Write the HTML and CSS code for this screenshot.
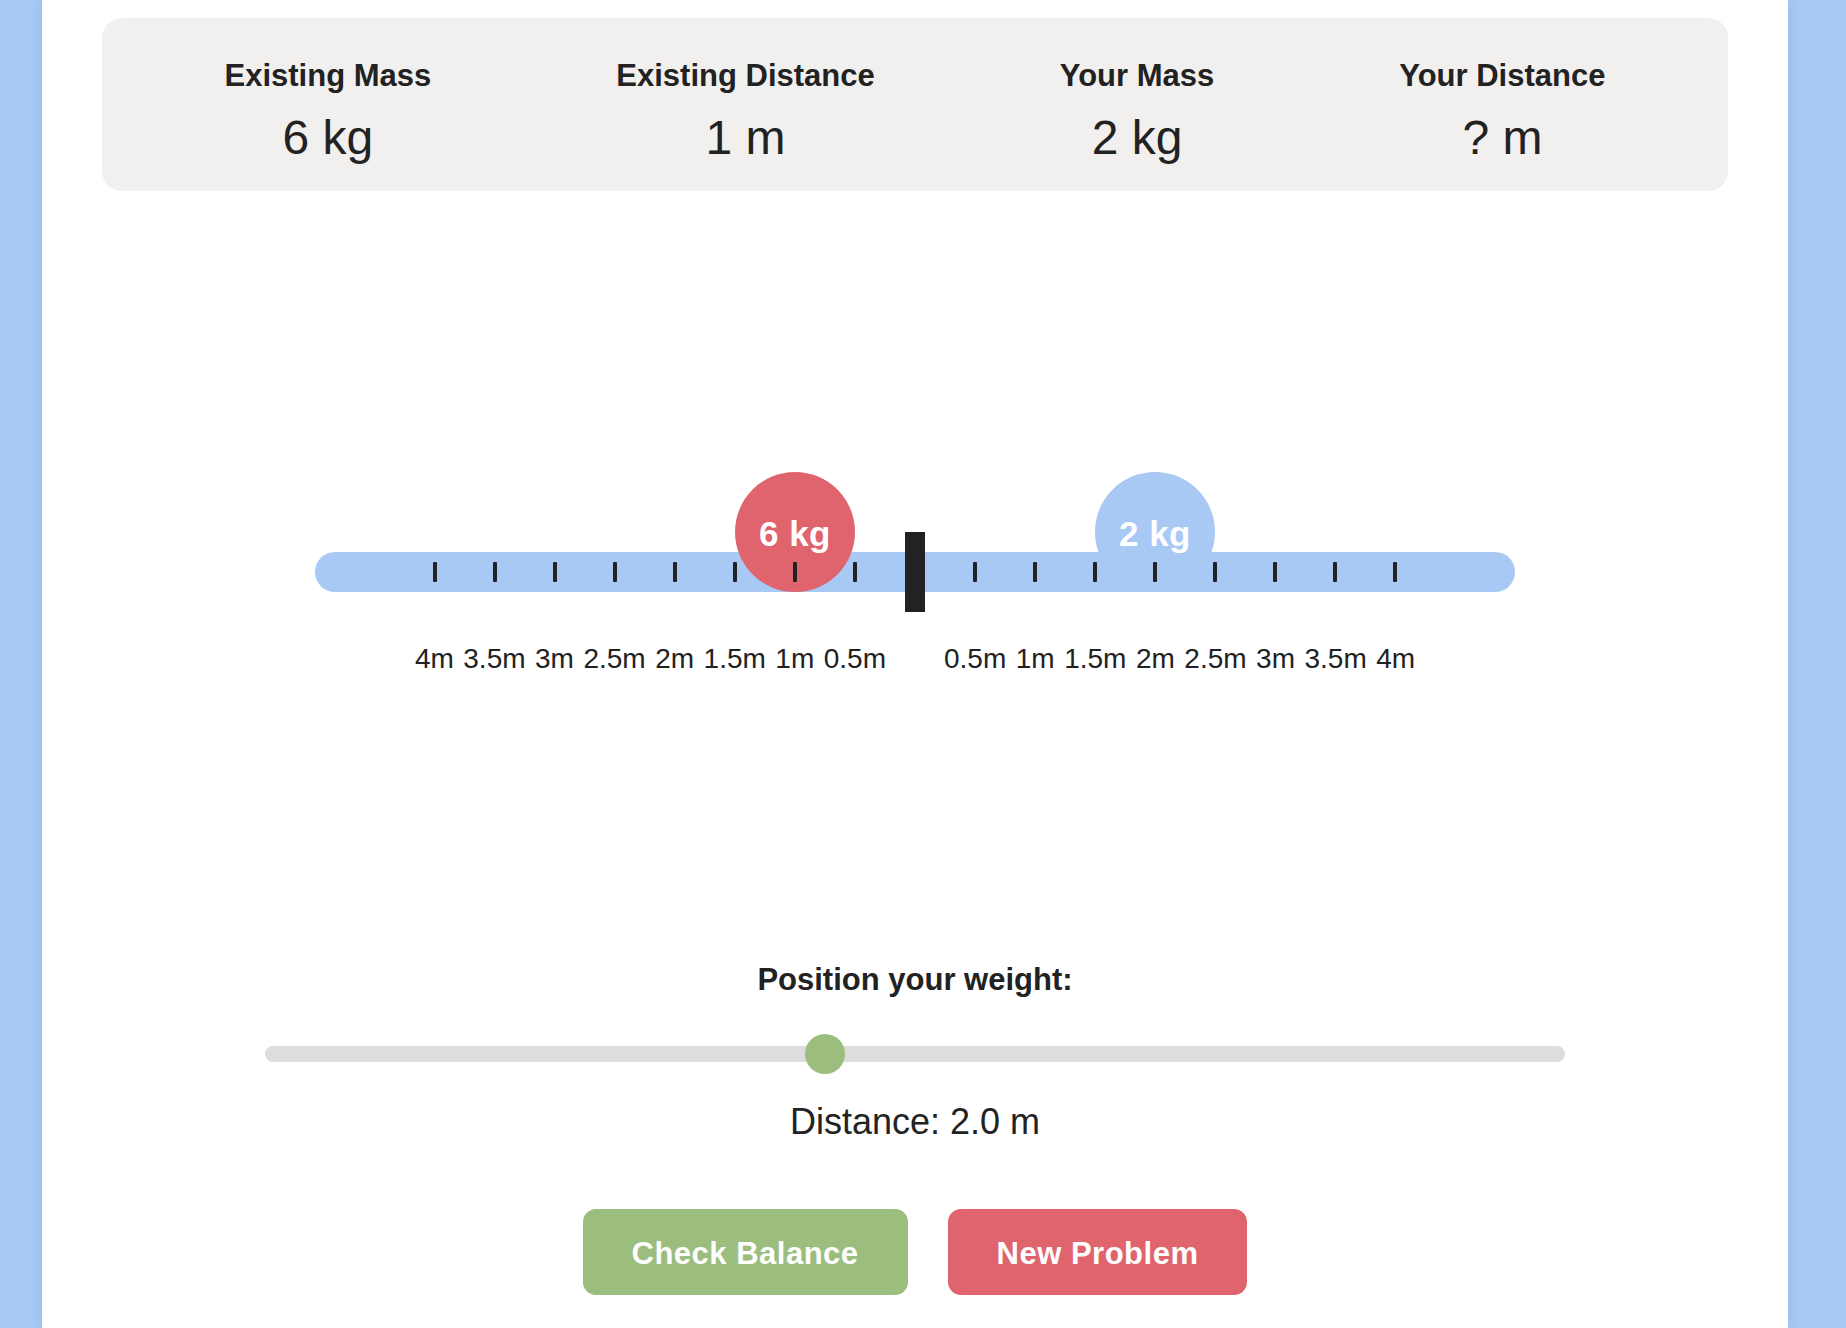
FILE: index.html
```html
<!DOCTYPE html>
<html lang="en">
<head>
<meta charset="utf-8">
<title>Balance the Seesaw</title>
<link rel="stylesheet" href="styles.css">
</head>
<body>
<main class="page">
  <section class="stats">
    <div class="stat">
      <div class="stat-label">Existing Mass</div>
      <div class="stat-value">6 kg</div>
    </div>
    <div class="stat">
      <div class="stat-label">Existing Distance</div>
      <div class="stat-value">1 m</div>
    </div>
    <div class="stat">
      <div class="stat-label">Your Mass</div>
      <div class="stat-value">2 kg</div>
    </div>
    <div class="stat">
      <div class="stat-label">Your Distance</div>
      <div class="stat-value">? m</div>
    </div>
  </section>

  <section class="scene">
    <div class="beam">
      <div class="weight weight-existing" style="--d:-1">6 kg</div>
      <div class="weight weight-yours" style="--d:2">2 kg</div>
      <div class="ticks">
        <span class="tick"></span><span class="tick"></span><span class="tick"></span><span class="tick"></span>
        <span class="tick"></span><span class="tick"></span><span class="tick"></span><span class="tick"></span>
        <span class="tick tick-gap"></span>
        <span class="tick"></span><span class="tick"></span><span class="tick"></span><span class="tick"></span>
        <span class="tick"></span><span class="tick"></span><span class="tick"></span><span class="tick"></span>
      </div>
      <div class="fulcrum"></div>
    </div>
    <div class="scale">
      <div class="scale-side">
        <span>4m</span><span>3.5m</span><span>3m</span><span>2.5m</span><span>2m</span><span>1.5m</span><span>1m</span><span>0.5m</span>
      </div>
      <div class="scale-side">
        <span>0.5m</span><span>1m</span><span>1.5m</span><span>2m</span><span>2.5m</span><span>3m</span><span>3.5m</span><span>4m</span>
      </div>
    </div>
  </section>

  <section class="controls">
    <label class="control-title" for="pos">Position your weight:</label>
    <input class="slider" id="pos" type="range" min="0.5" max="4" step="0.1" value="2">
    <div class="readout">Distance: 2.0 m</div>
    <div class="buttons">
      <button class="btn btn-check">Check Balance</button>
      <button class="btn btn-new">New Problem</button>
    </div>
  </section>
</main>
</body>
</html>
```

FILE: styles.css
```css
* {
  box-sizing: border-box;
}

html, body {
  margin: 0;
  padding: 0;
}

body {
  background: #a8c9f4;
  font-family: "Liberation Sans", Arial, Helvetica, sans-serif;
  color: #222;
  min-height: 1328px;
}

.page {
  width: 1746px;
  min-height: 1328px;
  margin-left: 42px;
  background: #fff;
  padding: 18px 60px 0;
  box-shadow: 0 0 14px rgba(40, 70, 120, 0.12);
  display: flex;
  flex-direction: column;
}

/* ---------- stats panel ---------- */
.stats {
  height: 173px;
  background: #f1f0ee;
  border-radius: 20px;
  padding: 40px 30px 0;
  display: flex;
  justify-content: space-around;
  align-items: flex-start;
}

.stat {
  text-align: center;
}

.stat-label {
  font-size: 31px;
  line-height: 36px;
  font-weight: 700;
}

.stat-value {
  margin-top: 16px;
  font-size: 48px;
  line-height: 56px;
}

/* ---------- seesaw scene ---------- */
.scene {
  display: flex;
  flex-direction: column;
  align-items: center;
}

.beam {
  position: relative;
  width: 1200px;
  height: 40px;
  margin-top: 361px;
  background: #a8c9f4;
  border-radius: 20px;
}

.weight {
  position: absolute;
  bottom: 0;
  left: calc(50% + var(--d) * 120px - 60px);
  width: 120px;
  height: 120px;
  border-radius: 50%;
  display: flex;
  align-items: center;
  justify-content: center;
  color: #fff;
  font-weight: 700;
  font-size: 35px;
  letter-spacing: 0.5px;
  padding-top: 3px;
}

.weight-existing {
  background: #e0646e;
}

.weight-yours {
  background: #a8c9f4;
}

.ticks {
  position: absolute;
  inset: 0;
  display: flex;
  justify-content: center;
  align-items: center;
}

.tick {
  width: 60px;
  height: 20px;
  display: flex;
  justify-content: center;
}

.tick::before {
  content: "";
  width: 4px;
  height: 20px;
  background: #222;
  border-radius: 1px;
}

.tick-gap::before {
  visibility: hidden;
}

.fulcrum {
  position: absolute;
  left: 50%;
  top: -20px;
  width: 20px;
  height: 80px;
  margin-left: -10px;
  background: #222;
}

.scale {
  margin-top: 51px;
  display: flex;
  justify-content: center;
  gap: 58px;
  font-size: 28px;
  line-height: 32px;
}

.scale-side {
  display: flex;
  gap: 9.5px;
}

/* ---------- controls ---------- */
.controls {
  display: flex;
  flex-direction: column;
  align-items: center;
}

.control-title {
  margin-top: 287px;
  font-size: 31px;
  line-height: 36px;
  font-weight: 700;
}

.slider {
  -webkit-appearance: none;
  appearance: none;
  display: block;
  width: 1300px;
  height: 40px;
  margin: 36px 0 0;
  padding: 0;
  background: transparent;
}

.slider::-webkit-slider-runnable-track {
  height: 16px;
  background: #ddd;
  border-radius: 8px;
}

.slider::-webkit-slider-thumb {
  -webkit-appearance: none;
  appearance: none;
  width: 40px;
  height: 40px;
  margin-top: -12px;
  border: none;
  border-radius: 50%;
  background: #9bbd7d;
}

.slider::-moz-range-track {
  height: 16px;
  background: #ddd;
  border-radius: 8px;
}

.slider::-moz-range-thumb {
  width: 40px;
  height: 40px;
  border: none;
  border-radius: 50%;
  background: #9bbd7d;
}

.readout {
  margin-top: 27px;
  font-size: 36px;
  line-height: 42px;
}

.buttons {
  margin-top: 66px;
  display: flex;
  gap: 40px;
}

.btn {
  height: 86px;
  padding: 4px 49px 0;
  border: none;
  border-radius: 13px;
  color: #fff;
  font-family: inherit;
  font-size: 31px;
  font-weight: 700;
  letter-spacing: 0.5px;
  cursor: pointer;
}

.btn-check {
  background: #9bbd7d;
}

.btn-new {
  background: #e0646e;
}
```
